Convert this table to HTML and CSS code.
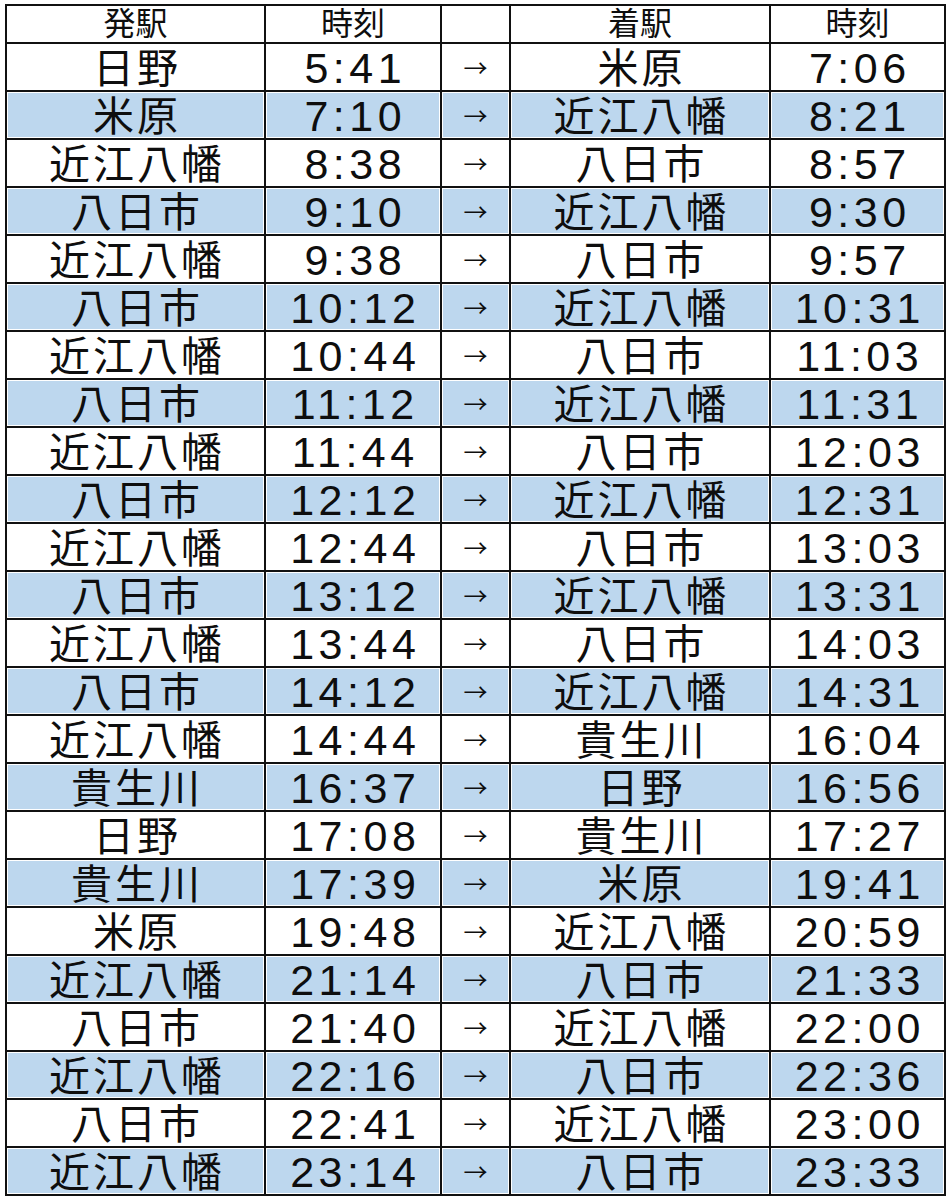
FILE: index.html
```html
<!DOCTYPE html>
<html lang="ja">
<head>
<meta charset="utf-8">
<title>時刻表</title>
<link rel="stylesheet" href="styles.css">
</head>
<body>
<div class="tt">
  <div class="row head"><div class="cell">発駅</div><div class="cell">時刻</div><div class="cell"></div><div class="cell">着駅</div><div class="cell">時刻</div></div>
  <div class="row"><div class="cell st">日野</div><div class="cell tm">5:41</div><div class="cell ar">→</div><div class="cell st">米原</div><div class="cell tm">7:06</div></div>
  <div class="row blue"><div class="cell st">米原</div><div class="cell tm">7:10</div><div class="cell ar">→</div><div class="cell st">近江八幡</div><div class="cell tm">8:21</div></div>
  <div class="row"><div class="cell st">近江八幡</div><div class="cell tm">8:38</div><div class="cell ar">→</div><div class="cell st">八日市</div><div class="cell tm">8:57</div></div>
  <div class="row blue"><div class="cell st">八日市</div><div class="cell tm">9:10</div><div class="cell ar">→</div><div class="cell st">近江八幡</div><div class="cell tm">9:30</div></div>
  <div class="row"><div class="cell st">近江八幡</div><div class="cell tm">9:38</div><div class="cell ar">→</div><div class="cell st">八日市</div><div class="cell tm">9:57</div></div>
  <div class="row blue"><div class="cell st">八日市</div><div class="cell tm">10:12</div><div class="cell ar">→</div><div class="cell st">近江八幡</div><div class="cell tm">10:31</div></div>
  <div class="row"><div class="cell st">近江八幡</div><div class="cell tm">10:44</div><div class="cell ar">→</div><div class="cell st">八日市</div><div class="cell tm">11:03</div></div>
  <div class="row blue"><div class="cell st">八日市</div><div class="cell tm">11:12</div><div class="cell ar">→</div><div class="cell st">近江八幡</div><div class="cell tm">11:31</div></div>
  <div class="row"><div class="cell st">近江八幡</div><div class="cell tm">11:44</div><div class="cell ar">→</div><div class="cell st">八日市</div><div class="cell tm">12:03</div></div>
  <div class="row blue"><div class="cell st">八日市</div><div class="cell tm">12:12</div><div class="cell ar">→</div><div class="cell st">近江八幡</div><div class="cell tm">12:31</div></div>
  <div class="row"><div class="cell st">近江八幡</div><div class="cell tm">12:44</div><div class="cell ar">→</div><div class="cell st">八日市</div><div class="cell tm">13:03</div></div>
  <div class="row blue"><div class="cell st">八日市</div><div class="cell tm">13:12</div><div class="cell ar">→</div><div class="cell st">近江八幡</div><div class="cell tm">13:31</div></div>
  <div class="row"><div class="cell st">近江八幡</div><div class="cell tm">13:44</div><div class="cell ar">→</div><div class="cell st">八日市</div><div class="cell tm">14:03</div></div>
  <div class="row blue"><div class="cell st">八日市</div><div class="cell tm">14:12</div><div class="cell ar">→</div><div class="cell st">近江八幡</div><div class="cell tm">14:31</div></div>
  <div class="row"><div class="cell st">近江八幡</div><div class="cell tm">14:44</div><div class="cell ar">→</div><div class="cell st">貴生川</div><div class="cell tm">16:04</div></div>
  <div class="row blue"><div class="cell st">貴生川</div><div class="cell tm">16:37</div><div class="cell ar">→</div><div class="cell st">日野</div><div class="cell tm">16:56</div></div>
  <div class="row"><div class="cell st">日野</div><div class="cell tm">17:08</div><div class="cell ar">→</div><div class="cell st">貴生川</div><div class="cell tm">17:27</div></div>
  <div class="row blue"><div class="cell st">貴生川</div><div class="cell tm">17:39</div><div class="cell ar">→</div><div class="cell st">米原</div><div class="cell tm">19:41</div></div>
  <div class="row"><div class="cell st">米原</div><div class="cell tm">19:48</div><div class="cell ar">→</div><div class="cell st">近江八幡</div><div class="cell tm">20:59</div></div>
  <div class="row blue"><div class="cell st">近江八幡</div><div class="cell tm">21:14</div><div class="cell ar">→</div><div class="cell st">八日市</div><div class="cell tm">21:33</div></div>
  <div class="row"><div class="cell st">八日市</div><div class="cell tm">21:40</div><div class="cell ar">→</div><div class="cell st">近江八幡</div><div class="cell tm">22:00</div></div>
  <div class="row blue"><div class="cell st">近江八幡</div><div class="cell tm">22:16</div><div class="cell ar">→</div><div class="cell st">八日市</div><div class="cell tm">22:36</div></div>
  <div class="row"><div class="cell st">八日市</div><div class="cell tm">22:41</div><div class="cell ar">→</div><div class="cell st">近江八幡</div><div class="cell tm">23:00</div></div>
  <div class="row blue"><div class="cell st">近江八幡</div><div class="cell tm">23:14</div><div class="cell ar">→</div><div class="cell st">八日市</div><div class="cell tm">23:33</div></div>
</div>
</body>
</html>
```

FILE: styles.css
```css
html, body {
  background: #ffffff;
}
body {
  margin: 4px 0 0 5px;
  font-family: "Liberation Sans", "Noto Sans CJK JP", sans-serif;
  color: #0e0e0e;
}
.tt {
  display: grid;
  grid-template-columns: 259px 176px 69px 260px 175px;
  grid-template-rows: 38px;
  grid-auto-rows: 48px;
  width: max-content;
  border-top: 2px solid #111;
  border-left: 2px solid #111;
}
.row {
  display: contents;
}
.cell {
  box-sizing: border-box;
  border-right: 2px solid #111;
  border-bottom: 2px solid #111;
  text-align: center;
  white-space: nowrap;
}
.head .cell {
  font-size: 32px;
  line-height: 34px;
  padding-top: 1px;
}
.st {
  font-size: 41px;
  letter-spacing: 3px;
  text-indent: 3px;
  line-height: 42px;
  padding-top: 4px;
}
.tm {
  font-size: 43px;
  letter-spacing: 4.5px;
  text-indent: 4.5px;
  line-height: 44px;
  padding-top: 2px;
}
.ar {
  font-family: "Noto Sans CJK JP", sans-serif;
  font-size: 24px;
  line-height: 44px;
  padding-top: 1px;
}
.blue .cell {
  background: #bdd7ee;
  box-shadow: inset 0 0 0 1px #ffffff;
}
```
